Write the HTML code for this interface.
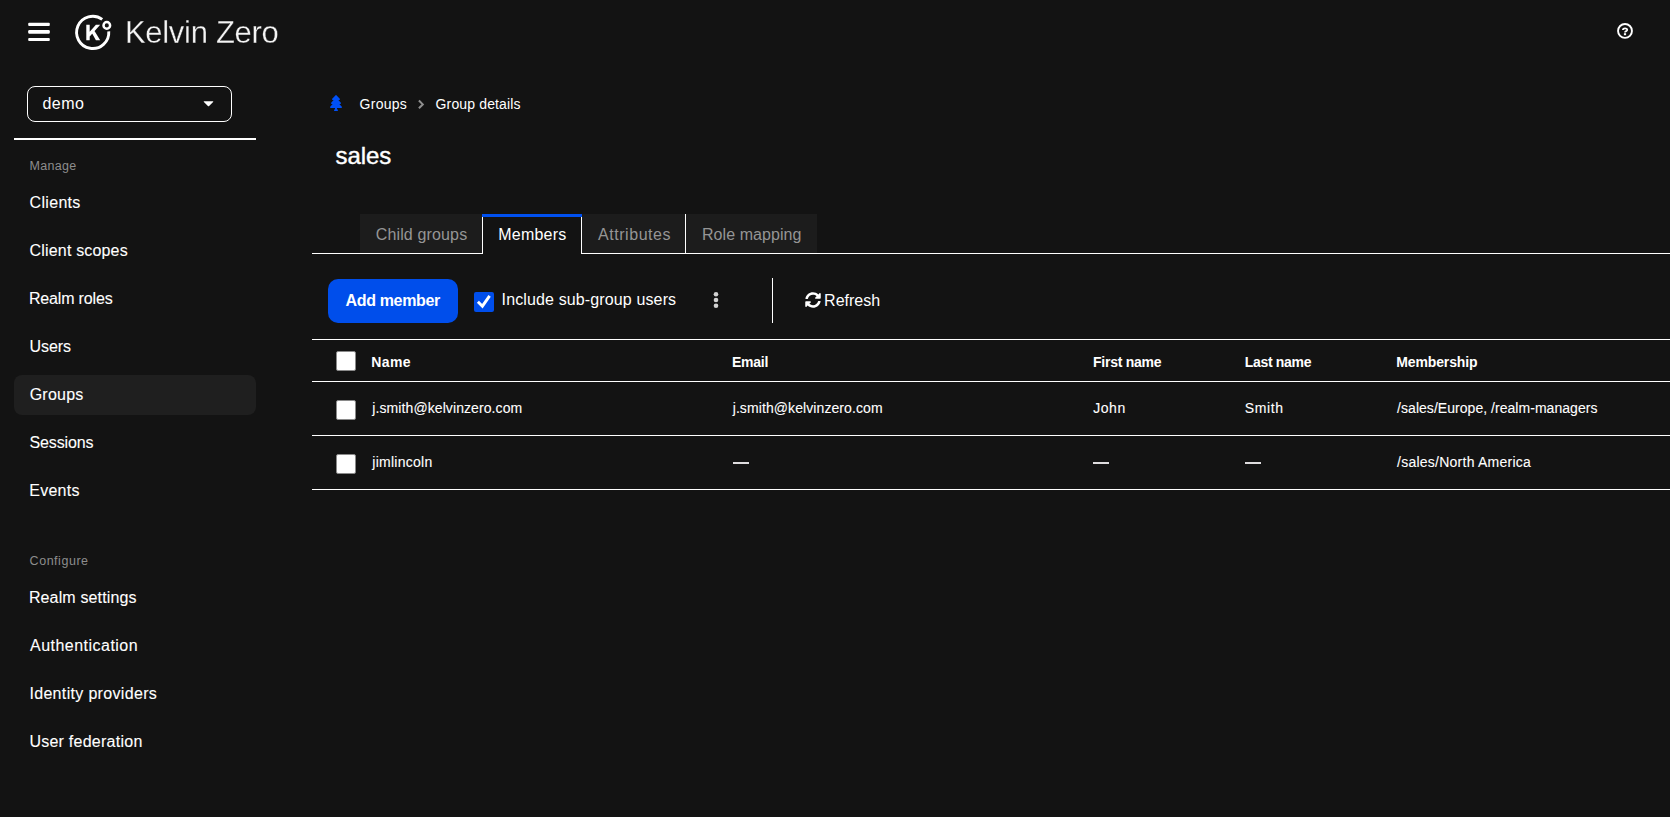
<!DOCTYPE html>
<html lang="en">
<head>
<meta charset="utf-8">
<title>Kelvin Zero - Group details</title>
<style>
*{box-sizing:border-box;margin:0;padding:0}
html,body{width:1670px;height:817px;overflow:hidden;background:#131313}
body{font-family:"Liberation Sans",sans-serif;color:#fff;position:relative;font-size:16px}
.abs{position:absolute}
.t{position:absolute;white-space:nowrap;line-height:1}
/* header */
#brand{font-size:31px;color:#f4f4f4;-webkit-text-stroke:0.3px #131313;will-change:transform}
/* sidebar */
#realm{left:27px;top:86px;width:205px;height:36px;border:1px solid #fff;border-radius:8px}
#realm .t{font-size:16px}
#sep{left:14px;top:138px;width:242px;height:2px;background:#fff}
.sect{font-size:12.5px;color:#8d8d8d}
.nav{font-size:16px;color:#fff;-webkit-text-stroke:0.1px #fff}
#cur{left:14px;top:375px;width:242px;height:40px;border-radius:8px;background:#1f1f1f}
/* main */
.bc{font-size:14px;color:#fff}
#title{font-size:24px;-webkit-text-stroke:0.4px #fff}
#tabs{left:360px;top:214px;height:39px;width:457px;background:#1c1c1c}
#tabline{left:312px;top:253px;width:1358px;height:1px;background:#fff}
#active{left:482px;top:214px;width:100px;height:40px;background:#131313;border-left:1px solid #fff;border-right:1px solid #fff}
#abar{left:482px;top:214px;width:100px;height:3px;background:#0050f0}
#tabsep{left:685px;top:214px;width:1px;height:39px;background:#fff}
.tab{font-size:16px;color:#959595;top:226.5px}
.tab.on{color:#fff}
#add{left:328px;top:279px;width:130px;height:44px;border-radius:10px;background:#004eeb}
#add .t{font-size:16px;font-weight:bold}
#chk{left:474px;top:292px;width:20px;height:20px;border-radius:2px;background:#004eeb}
#vsep{left:772px;top:278px;width:1px;height:45px;background:#fff}
.hl{left:312px;width:1358px;height:1px;background:#fff}
.cb{width:20px;height:20px;left:336px;background:#fff;border:1px solid #8a8a8a;border-radius:2px}
.th{font-size:14px;font-weight:bold;top:355px}
.td{font-size:14px;-webkit-text-stroke:0.1px #fff}
.r1{top:401px}
.r2{top:455px}
.dash{height:2px;width:16px;background:#dedcde;top:462px}
</style>
</head>
<body>

<!-- masthead -->
<svg class="abs" style="left:28px;top:22px" width="22" height="20" viewBox="0 0 22 20">
  <rect x="0.2" y="0.8" width="21.6" height="3.3" rx="1" fill="#fff"/>
  <rect x="0.2" y="8.1" width="21.6" height="3.7" rx="1.2" fill="#fff"/>
  <rect x="0.2" y="15.9" width="21.6" height="3.2" rx="1" fill="#fff"/>
</svg>
<svg class="abs" style="left:70px;top:10px" width="46" height="45" viewBox="70 10 46 45">
  <path d="M102.23 19.43 A16.1 16.1 0 1 0 108.76 31.28" fill="none" stroke="#fff" stroke-width="2.9"/>
  <circle cx="106.8" cy="25.4" r="3.3" fill="none" stroke="#fff" stroke-width="2.5"/>
  <path fill="#fff" d="M86.3 24.8H89.7V40.2H86.3ZM95.9 24.8H100.2L89.7 36.45V31.76ZM91.76 32.87L94.24 30.39L100.2 40.2H95.9Z"/>
</svg>
<div class="t" id="brand" style="left:124.6px;top:17px;letter-spacing:-0.31px">Kelvin Zero</div>
<svg class="abs" style="left:1617px;top:23px" width="16" height="16" viewBox="0 0 16 16"><circle cx="8" cy="7.9" r="6.95" fill="none" stroke="#fff" stroke-width="1.9"/><path d="M5.9 7.1C5.9 4.9 10.2 4.9 10.2 6.9C10.2 8.2 8 8 8 9.5" fill="none" stroke="#fff" stroke-width="1.8"/><rect x="6.9" y="10.2" width="2.2" height="2" fill="#fff"/></svg>

<!-- sidebar -->
<div class="abs" id="realm">
  <div class="t" style="left:14.4px;top:9px;letter-spacing:0.47px">demo</div>
  <svg class="abs" style="left:174.8px;top:14px" width="11" height="7" viewBox="0 0 11 7"><path d="M1.2 0.2H9.8Q10.8 0.3 10.1 1.1L6.1 4.9Q5.5 5.4 4.9 4.9L0.9 1.1Q0.2 0.3 1.2 0.2Z" fill="#fff"/></svg>
</div>
<div class="abs" id="sep"></div>
<div class="abs" id="cur"></div>
<div class="t sect" style="left:29.5px;top:159.7px;letter-spacing:0.3px">Manage</div>
<div class="t nav" style="left:29.6px;top:195px;letter-spacing:0.31px">Clients</div>
<div class="t nav" style="left:29.6px;top:243px;letter-spacing:0.17px">Client scopes</div>
<div class="t nav" style="left:28.9px;top:291px;letter-spacing:-0.16px">Realm roles</div>
<div class="t nav" style="left:29.4px;top:339px;letter-spacing:-0.03px">Users</div>
<div class="t nav" style="left:29.7px;top:387px;letter-spacing:0.24px">Groups</div>
<div class="t nav" style="left:29.6px;top:435px;letter-spacing:-0.15px">Sessions</div>
<div class="t nav" style="left:29.3px;top:483px;letter-spacing:0.24px">Events</div>
<div class="t sect" style="left:29.6px;top:555px;letter-spacing:0.53px">Configure</div>
<div class="t nav" style="left:28.9px;top:590px;letter-spacing:0.14px">Realm settings</div>
<div class="t nav" style="left:30px;top:638px;letter-spacing:0.48px">Authentication</div>
<div class="t nav" style="left:29.4px;top:686px;letter-spacing:0.33px">Identity providers</div>
<div class="t nav" style="left:29.4px;top:734px;letter-spacing:0.25px">User federation</div>

<!-- breadcrumb -->
<svg class="abs" style="left:330px;top:95px" width="12" height="16" viewBox="0 0 384 512"><path fill="#0050f8" d="M378.31 378.49L298.42 288h30.63c9.01 0 16.98-5 20.78-13.06 3.8-8.04 2.55-17.26-3.28-24.05L268.42 160h28.89c9.1 0 17.3-5.35 20.86-13.61 3.52-8.13 1.86-17.59-4.24-24.08L203.66 4.83c-6.03-6.45-17.28-6.45-23.32 0L70.06 122.31c-6.1 6.49-7.75 15.95-4.24 24.08C69.38 154.65 77.59 160 86.69 160h28.89l-78.14 90.91c-5.81 6.78-7.06 15.99-3.27 24.04C37.97 283 45.93 288 54.95 288h30.63L5.69 378.49c-6 6.79-7.36 16.09-3.56 24.26 3.75 8.05 12 13.25 21.01 13.25H160v24.45l-30.29 48.4c-5.32 10.64 2.42 23.16 14.31 23.16h95.96c11.89 0 19.63-12.52 14.31-23.16L224 440.45V416h136.86c9.01 0 17.26-5.2 21.01-13.25 3.8-8.17 2.44-17.47-3.56-24.26z"/></svg>
<div class="t bc" style="left:359.6px;top:97px;letter-spacing:0.26px">Groups</div>
<svg class="abs" style="left:417px;top:99px" width="8" height="11" viewBox="0 0 8 11"><path d="M1.9 1.5L5.8 5.4L1.9 9.3" fill="none" stroke="#8f8f8f" stroke-width="2"/></svg>
<div class="t bc" style="left:435.6px;top:97px;letter-spacing:0.14px">Group details</div>
<div class="t" id="title" style="left:335.5px;top:144px;letter-spacing:-0.08px">sales</div>

<!-- tabs -->
<div class="abs" id="tabs"></div>
<div class="abs" id="tabline"></div>
<div class="abs" id="active"></div>
<div class="abs" id="abar"></div>
<div class="abs" id="tabsep"></div>
<div class="t tab" style="left:375.7px;letter-spacing:0.15px">Child groups</div>
<div class="t tab on" style="left:498.3px;letter-spacing:0.2px">Members</div>
<div class="t tab" style="left:598px;letter-spacing:0.55px">Attributes</div>
<div class="t tab" style="left:701.9px;letter-spacing:0.08px">Role mapping</div>

<!-- toolbar -->
<div class="abs" id="add"><div class="t" style="left:17.6px;top:14px;letter-spacing:-0.35px">Add member</div></div>
<div class="abs" id="chk"><svg class="abs" style="left:0;top:0" width="20" height="20" viewBox="0 0 20 20"><path d="M3.9 9.7L8.4 14.2L15.6 3.8" fill="none" stroke="#fff" stroke-width="2.9"/></svg></div>
<div class="t" style="left:501.6px;top:292px;font-size:16px;letter-spacing:0.13px">Include sub-group users</div>
<svg class="abs" style="left:712px;top:290px" width="8" height="20" viewBox="0 0 8 20"><g fill="#d2d2d2"><circle cx="4" cy="4.3" r="2.3"/><circle cx="4" cy="10" r="2.3"/><circle cx="4" cy="15.8" r="2.3"/></g></svg>
<div class="abs" id="vsep"></div>
<svg class="abs" style="left:805px;top:292px" width="16" height="16" viewBox="0 0 512 512"><path fill="#fff" d="M370.72 133.28C339.458 104.008 298.888 87.962 255.848 88c-77.458.068-144.328 53.178-162.791 126.85-1.344 5.363-6.122 9.15-11.651 9.15H24.103c-7.498 0-13.194-6.807-11.807-14.176C33.933 94.924 134.813 8 256 8c66.448 0 126.791 26.136 171.315 68.685L463.03 40.97C478.149 25.851 504 36.559 504 57.941V192c0 13.255-10.745 24-24 24H345.941c-21.382 0-32.09-25.851-16.971-40.971l41.75-41.749zM32 296h134.059c21.382 0 32.09 25.851 16.971 40.971l-41.75 41.75c31.262 29.273 71.835 45.319 114.876 45.28 77.418-.07 144.315-53.144 162.787-126.849 1.344-5.363 6.122-9.15 11.651-9.15h57.304c7.498 0 13.194 6.807 11.807 14.176C478.067 417.076 377.187 504 256 504c-66.448 0-126.791-26.136-171.315-68.685L48.970 471.030C33.851 486.149 8 475.441 8 454.059V320c0-13.255 10.745-24 24-24z"/></svg>
<div class="t" style="left:824.1px;top:293px;font-size:16px;letter-spacing:0px">Refresh</div>

<!-- table -->
<div class="abs hl" style="top:339px"></div>
<div class="abs hl" style="top:381px"></div>
<div class="abs hl" style="top:435px"></div>
<div class="abs hl" style="top:489px"></div>
<div class="abs cb" style="top:351px"></div>
<div class="abs cb" style="top:400px"></div>
<div class="abs cb" style="top:454px"></div>
<div class="t th" style="left:371.2px;letter-spacing:0.4px">Name</div>
<div class="t th" style="left:732px;letter-spacing:-0.25px">Email</div>
<div class="t th" style="left:1093px;letter-spacing:-0.25px">First name</div>
<div class="t th" style="left:1244.8px;letter-spacing:-0.32px">Last name</div>
<div class="t th" style="left:1396.2px;letter-spacing:-0.12px">Membership</div>
<div class="t td r1" style="left:372.3px;letter-spacing:0.09px">j.smith@kelvinzero.com</div>
<div class="t td r1" style="left:732.7px;letter-spacing:0.09px">j.smith@kelvinzero.com</div>
<div class="t td r1" style="left:1093.2px;letter-spacing:0.57px">John</div>
<div class="t td r1" style="left:1244.7px;letter-spacing:0.65px">Smith</div>
<div class="t td r1" style="left:1397.1px;letter-spacing:0.04px">/sales/Europe, /realm-managers</div>
<div class="t td r2" style="left:372.3px;letter-spacing:0.26px">jimlincoln</div>
<div class="abs dash" style="left:733px"></div>
<div class="abs dash" style="left:1093px"></div>
<div class="abs dash" style="left:1245px"></div>
<div class="t td r2" style="left:1397.1px;letter-spacing:0.24px">/sales/North America</div>

</body>
</html>
